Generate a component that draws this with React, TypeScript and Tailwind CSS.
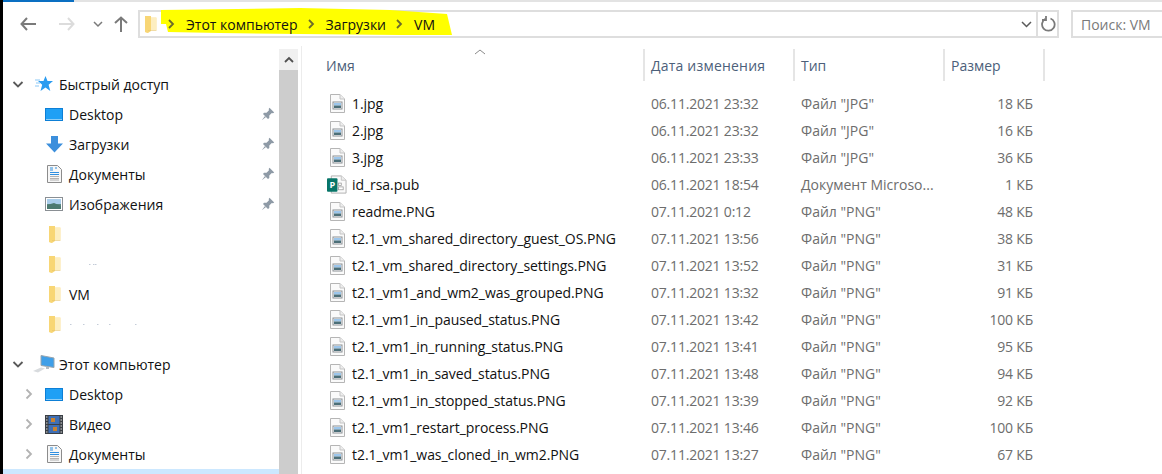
import React from "react";

const files = [
  ["1.jpg", "06.11.2021 23:32", 'Файл "JPG"', "18 КБ"],
  ["2.jpg", "06.11.2021 23:32", 'Файл "JPG"', "16 КБ"],
  ["3.jpg", "06.11.2021 23:33", 'Файл "JPG"', "36 КБ"],
  ["id_rsa.pub", "06.11.2021 18:54", "Документ Microso...", "1 КБ"],
  ["readme.PNG", "07.11.2021 0:12", 'Файл "PNG"', "48 КБ"],
  ["t2.1_vm_shared_directory_guest_OS.PNG", "07.11.2021 13:56", 'Файл "PNG"', "38 КБ"],
  ["t2.1_vm_shared_directory_settings.PNG", "07.11.2021 13:52", 'Файл "PNG"', "31 КБ"],
  ["t2.1_vm1_and_wm2_was_grouped.PNG", "07.11.2021 13:32", 'Файл "PNG"', "91 КБ"],
  ["t2.1_vm1_in_paused_status.PNG", "07.11.2021 13:42", 'Файл "PNG"', "100 КБ"],
  ["t2.1_vm1_in_running_status.PNG", "07.11.2021 13:41", 'Файл "PNG"', "95 КБ"],
  ["t2.1_vm1_in_saved_status.PNG", "07.11.2021 13:48", 'Файл "PNG"', "94 КБ"],
  ["t2.1_vm1_in_stopped_status.PNG", "07.11.2021 13:39", 'Файл "PNG"', "92 КБ"],
  ["t2.1_vm1_restart_process.PNG", "07.11.2021 13:46", 'Файл "PNG"', "100 КБ"],
  ["t2.1_vm1_was_cloned_in_wm2.PNG", "07.11.2021 13:27", 'Файл "PNG"', "67 КБ"],
];

function FolderIcon() {
  return (
    <svg width="13" height="19" viewBox="0 0 13 19">
      <path d="M1 1H7V2.500H12.500V15H4V18L1 17Z" fill="#fbe29a" />
      <path d="M1 1H7V16L4 18L1 17Z" fill="#f8d675" />
      <path d="M7 3H12V15H7Z" fill="#fdeec0" />
      <path d="M4 15H12.500V15.600H4Z" fill="#e8c56a" />
    </svg>
  );
}

function ImageFile() {
  return (
    <svg width="15" height="19" viewBox="0 0 15 19">
      <path d="M.5.5H10L14.500 5V18.500H.5Z" fill="#fafafa" stroke="#b5b5b5" />
      <path d="M10 .5V5H14.500" fill="#eee" stroke="#c4c4c4" />
      <rect x="3" y="8" width="9" height="7" fill="#fff" stroke="#8a8f94" />
      <rect x="4" y="9" width="7" height="2.500" fill="#9cc6ec" />
      <rect x="4" y="11.500" width="7" height="2.500" fill="#4c6f78" />
    </svg>
  );
}

function PublisherFile() {
  return (
    <svg width="21" height="20" viewBox="0 0 21 20">
      <path d="M4.500 .5H15L20 5V18.500H4.500Z" fill="#fafafa" stroke="#b0b0b0" />
      <path d="M15 .5V5H20" fill="#eee" stroke="#c4c4c4" />
      <rect x="12" y="8" width="3" height="2.500" fill="#fff" stroke="#9a9a9a" strokeWidth=".8" />
      <rect x="12" y="12" width="5" height="3" fill="#fff" stroke="#9a9a9a" strokeWidth=".8" />
      <rect x="0" y="3" width="11" height="14" rx="1" fill="#077568" />
      <text x="5.500" y="13.500" fontSize="9.500" fontWeight="700" fill="#fff" textAnchor="middle" fontFamily="Open Sans">P</text>
    </svg>
  );
}

function Pin() {
  return (
    <svg width="14" height="14" viewBox="0 0 14 14">
      <path d="M8.500 .8L13.200 5.500L12 6.300L10.800 6L8.300 8.500L8.300 11L7 12L2 7L3 5.700L5.500 5.700L8 3.200L7.700 2Z" fill="#8e9aa6" />
      <path d="M4 9L.8 13.200L5 10Z" fill="#8e9aa6" />
    </svg>
  );
}

function Chevron({ open, color = "#b3b3b3" }: { open?: boolean; color?: string }) {
  return (
    <svg width="12" height="12" viewBox="0 0 12 12" fill="none" stroke={color} strokeWidth="1.800">
      {open ? <path d="M1.500 4L6 8.500L10.500 4" /> : <path d="M3.500 1.500L8 6L3.500 10.500" />}
    </svg>
  );
}

function StarIcon() {
  return (
    <svg width="18" height="16" viewBox="0 0 18 16">
      <path d="M10.500 0L12.500 5H18L13.600 8.700L15.300 15L10.500 11.500L5.500 15L7.200 8.700L3 5H8.500Z" fill="#2b9cf0" />
      <path d="M0 4H5M1 7H5M0 10H4" stroke="#8cc8f5" strokeWidth="1" />
    </svg>
  );
}

function DesktopIcon() {
  return (
    <svg width="18" height="13" viewBox="0 0 18 13">
      <rect width="18" height="13" fill="#0d7fd6" />
      <rect x="1" y="1" width="16" height="10" fill="#1fa0f5" />
      <rect x="1" y="11" width="16" height="1" fill="#8ccdf7" />
    </svg>
  );
}

function DownloadIcon() {
  return (
    <svg width="17" height="17" viewBox="0 0 17 17">
      <path d="M5 0H12V7.500H17L8.500 16.500L0 7.500H5Z" fill="#3c8fdc" />
    </svg>
  );
}

function DocsIcon() {
  return (
    <svg width="15" height="18" viewBox="0 0 15 18">
      <path d="M.5.5H10.500L14.500 4.500V17.500H.5Z" fill="#f7f7f7" stroke="#8c8c8c" />
      <path d="M3 3H6M3 5H6M8 3H10" stroke="#2f8fe0" strokeWidth="1.200" />
      <path d="M3 7.500H12M3 9.500H12" stroke="#2f8fe0" strokeWidth="1" />
      <path d="M3 11.500H12M3 13.500H12M3 15H12" stroke="#a0a0a0" strokeWidth=".8" />
    </svg>
  );
}

function PicturesIcon() {
  return (
    <svg width="18" height="14" viewBox="0 0 18 14">
      <rect x=".5" y=".5" width="17" height="13" fill="#fff" stroke="#8a8f94" />
      <rect x="2" y="2" width="14" height="5" fill="#a9cdea" />
      <rect x="2" y="7" width="14" height="5" fill="#5d8a85" />
      <path d="M2 8L9 6L16 9V12H2Z" fill="#4c7a70" />
    </svg>
  );
}

function ComputerIcon() {
  return (
    <svg width="22" height="18" viewBox="0 0 22 18">
      <path d="M8 .5L21 3V12.500L8 10.500Z" fill="#3f9fe8" stroke="#9aa5ad" />
      <path d="M13 11.500L16 12V14H13Z" fill="#b5bcc2" />
      <path d="M0 16L8 12.500L12 13.500L5 17.500Z" fill="#d8dbde" />
    </svg>
  );
}

function VideoIcon() {
  return (
    <svg width="18" height="19" viewBox="0 0 18 19">
      <rect width="18" height="19" fill="#3a3f45" />
      <rect x="3.500" y="1" width="11" height="8" fill="#3f6fb4" />
      <rect x="3.500" y="10" width="11" height="8" fill="#3f6fb4" />
      <path d="M6 3H10V7H6ZM8 12H12V16H8Z" fill="#c9822e" />
      <path d="M1 2H2.500M1 5H2.500M1 8H2.500M1 11H2.500M1 14H2.500M1 17H2.500M15.500 2H17M15.500 5H17M15.500 8H17M15.500 11H17M15.500 14H17M15.500 17H17" stroke="#d8d8d8" />
    </svg>
  );
}

// what is left of the names painted out in the reference
function Specks({ xs }: { xs: number[] }) {
  return (
    <svg width="80" height="8" viewBox="0 0 80 8">
      {xs.map((x) => (
        <rect key={x} x={x} y="4" width="1.500" height="1" fill="#c4ccd8" />
      ))}
    </svg>
  );
}

function NavRow({
  icon,
  label,
  pin,
  expander,
}: {
  icon: React.ReactNode;
  label?: React.ReactNode;
  pin?: boolean;
  expander?: boolean;
}) {
  return (
    <div className="flex h-[30px] items-center">
      <div className="flex w-[38px] justify-center pl-[13px]">{expander && <Chevron />}</div>
      <div className="flex w-[25px] justify-center pl-[1px]">{icon}</div>
      <span className="ml-[3px] flex-1 text-[#111]">{label}</span>
      {pin && (
        <div className="mr-[4px] w-[14px]">
          <Pin />
        </div>
      )}
    </div>
  );
}

function NavHeading({ icon, label }: { icon: React.ReactNode; label: string }) {
  return (
    <div className="flex h-[30px] items-center">
      <div className="ml-[9px] w-[12px]">
        <Chevron open color="#5a5a5a" />
      </div>
      <div className="ml-[8px] flex w-[24px] justify-center">{icon}</div>
      <span className="ml-[3px] text-[#111]">{label}</span>
    </div>
  );
}

function Crumb({ label }: { label: string }) {
  return (
    <>
      <svg width="7" height="10" viewBox="0 0 7 10" fill="none" stroke="#6b6b2a" strokeWidth="1.800" className="mx-[6px]">
        <path d="M1 1L5 5L1 9" />
      </svg>
      <span className="ml-[5px] mr-[4px] text-[#111]">{label}</span>
    </>
  );
}

export default function App() {
  return (
    <div
      className="flex h-[474px] w-[1162px] overflow-hidden bg-white text-[14px]"
      style={{ fontFamily: '"Open Sans", "Noto Sans", sans-serif' }}
    >
      <div className="w-[3px] shrink-0 bg-black" />
      <div className="flex min-w-0 flex-1 flex-col">
        {/* top border */}
        <div className="flex h-[2px] shrink-0">
          <div className="w-[71px] bg-[#0a6fc2]" />
          <div className="flex-1 bg-[#e3e3e3]" />
        </div>

        {/* toolbar */}
        <div className="flex h-[44px] shrink-0 items-center">
          <svg width="16" height="14" viewBox="0 0 16 14" fill="none" stroke="#7a7a7a" strokeWidth="2" className="ml-[17px]">
            <path d="M7 1L1.500 7L7 13M2 7H16" />
          </svg>
          <svg width="16" height="14" viewBox="0 0 16 14" fill="none" stroke="#dcdcdc" strokeWidth="2" className="ml-[23px]">
            <path d="M9 1L14.500 7L9 13M14 7H0" />
          </svg>
          <svg width="10" height="7" viewBox="0 0 10 7" fill="none" stroke="#7a7a7a" strokeWidth="1.500" className="ml-[18px]">
            <path d="M1 1L5 5L9 1" />
          </svg>
          <svg width="14" height="16" viewBox="0 0 14 16" fill="none" stroke="#7a7a7a" strokeWidth="2" className="ml-[11px]">
            <path d="M1 7L7 1.500L13 7M7 2V16" />
          </svg>

          {/* address bar */}
          <div className="relative ml-[10px] flex h-[28px] w-[921px] items-center border-2 border-[#dedede]">
            <svg width="300" height="36" viewBox="0 0 300 36" className="absolute left-[20px] top-[-5px]">
              <path d="M1 3L40 2.500L140 1L230 3L287 7L292 28L240 28L140 27L60 26L8 25L6 17L1 17Z" fill="#ffff00" />
            </svg>
            <div className="relative ml-[4px] flex items-center">
              <FolderIcon />
              <div className="ml-[5px] flex items-center">
                <Crumb label="Этот компьютер" />
                <Crumb label="Загрузки" />
                <Crumb label="VM" />
              </div>
            </div>
            <div className="ml-auto flex h-full items-center">
              <svg width="11" height="7" viewBox="0 0 11 7" fill="none" stroke="#5a5a5a" strokeWidth="1.500" className="mr-[4px]">
                <path d="M1 1L5.500 5.500L10 1" />
              </svg>
              <div className="flex h-full w-[21px] items-center justify-center border-l-2 border-[#dedede]">
                <svg width="16" height="16" viewBox="0 0 16 16" fill="none" stroke="#7a7a7a" strokeWidth="1.800">
                  <path d="M5.500 2.800A6.300 6.300 0 1 0 10.500 2.500" />
                  <path d="M6 0V4H2" />
                </svg>
              </div>
            </div>
          </div>

          {/* search */}
          <div className="ml-[12px] flex h-[28px] flex-1 items-center border-2 border-r-0 border-[#dedede] pl-[8px] text-[#7a7a7a]">
            Поиск: VM
          </div>
        </div>

        <div className="flex min-h-0 flex-1">
          {/* navigation pane */}
          <div className="w-[276px] shrink-0 overflow-hidden pt-[23px]">
            <NavHeading icon={<StarIcon />} label="Быстрый доступ" />
            <NavRow icon={<DesktopIcon />} label="Desktop" pin />
            <NavRow icon={<DownloadIcon />} label="Загрузки" pin />
            <NavRow icon={<DocsIcon />} label="Документы" pin />
            <NavRow icon={<PicturesIcon />} label="Изображения" pin />
            <NavRow icon={<FolderIcon />} />
            <NavRow icon={<FolderIcon />} label={<Specks xs={[20, 24, 26]} />} />
            <NavRow icon={<FolderIcon />} label="VM" />
            <NavRow icon={<FolderIcon />} label={<Specks xs={[1, 14, 28, 40, 66]} />} />
            <div className="h-[10px]" />
            <NavHeading icon={<ComputerIcon />} label="Этот компьютер" />
            <NavRow icon={<DesktopIcon />} label="Desktop" expander />
            <NavRow icon={<VideoIcon />} label="Видео" expander />
            <NavRow icon={<DocsIcon />} label="Документы" expander />
            <div className="h-[30px] bg-[#cce8ff]" />
          </div>

          {/* scrollbar */}
          <div className="mt-[3px] flex w-[19px] shrink-0 flex-col">
            <div className="flex h-[21px] items-center justify-center bg-[#f0f0f0]">
              <svg width="10" height="7" viewBox="0 0 10 7" fill="none" stroke="#505050" strokeWidth="1.800">
                <path d="M1 6L5 2L9 6" />
              </svg>
            </div>
            <div className="flex-1 bg-[#cdcdcd]" />
          </div>
          <div className="ml-[3px] w-px shrink-0 bg-[#ececec]" />

          {/* file list */}
          <div className="relative flex-1">
            <svg width="12" height="6" viewBox="0 0 12 6" fill="none" stroke="#8a8a8a" className="absolute left-[172px] top-[3px]">
              <path d="M1 5L6 1L11 5" />
            </svg>
            <div className="mt-[3px] flex h-[32px] items-center text-[#4c607a]">
              <div className="w-[341px] pl-[24px]">Имя</div>
              <div className="flex h-full w-[150px] items-center border-l-2 border-[#e5e5e5] pl-[6px] tracking-[0.2px]">Дата изменения</div>
              <div className="flex h-full w-[150px] items-center border-l-2 border-[#e5e5e5] pl-[6px]">Тип</div>
              <div className="flex h-full w-[102px] items-center border-x-2 border-[#e5e5e5] pl-[6px]">Размер</div>
            </div>
            <div className="pt-[9px]">
              {files.map(([name, date, type, size]) => (
                <div key={name} className="flex h-[27px] items-center">
                  <div className="flex w-[341px] items-center pl-[25px]">
                    <div className="flex w-[20px] justify-center">
                      {name.endsWith(".pub") ? <PublisherFile /> : <ImageFile />}
                    </div>
                    <span className="ml-[5px] tracking-[-0.06px] text-[#111]">{name}</span>
                  </div>
                  <div className="w-[150px] pl-[8px] tracking-[-0.2px] text-[#6d6d6d]">{date}</div>
                  <div className="w-[150px] pl-[8px] text-[#6d6d6d]">{type}</div>
                  <div className="w-[90px] text-right tracking-[-0.2px] text-[#6d6d6d]">{size}</div>
                </div>
              ))}
            </div>
          </div>
        </div>
      </div>
    </div>
  );
}
